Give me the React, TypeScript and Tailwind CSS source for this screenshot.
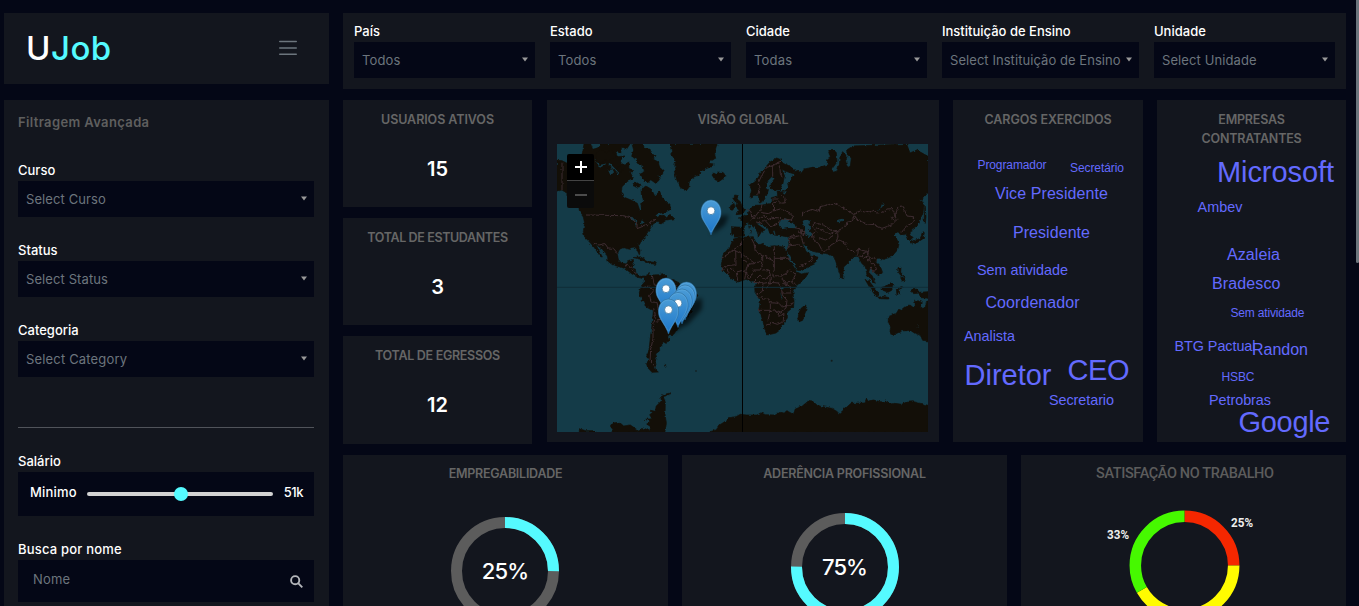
import React from "react";

const sea = "#143b48";
const land = "#130f08";

type WordProps = { x: number; y: number; w: number; size: number; text: string };

const positions: WordProps[] = [
  { x: 24.5, y: 69, w: 69, size: 12, text: "Programador" },
  { x: 117, y: 72, w: 54, size: 12, text: "Secretário" },
  { x: 42, y: 99, w: 113, size: 16, text: "Vice Presidente" },
  { x: 60, y: 138, w: 77, size: 16, text: "Presidente" },
  { x: 24, y: 175, w: 91, size: 14.4, text: "Sem atividade" },
  { x: 32.5, y: 208, w: 94, size: 16, text: "Coordenador" },
  { x: 11, y: 241, w: 51, size: 14.4, text: "Analista" },
  { x: 11.5, y: 285, w: 87, size: 29, text: "Diretor" },
  { x: 114.5, y: 280, w: 62, size: 29, text: "CEO" },
  { x: 96, y: 305, w: 65, size: 14.4, text: "Secretario" },
];

const companies: WordProps[] = [
  { x: 60, y: 82, w: 117, size: 29, text: "Microsoft" },
  { x: 40.5, y: 112, w: 45, size: 14.4, text: "Ambev" },
  { x: 70, y: 160, w: 53, size: 16, text: "Azaleia" },
  { x: 55, y: 189, w: 68.5, size: 16, text: "Bradesco" },
  { x: 73.5, y: 217, w: 74, size: 12, text: "Sem atividade" },
  { x: 17.5, y: 251, w: 81, size: 14.4, text: "BTG Pactual" },
  { x: 95, y: 255, w: 56, size: 16, text: "Randon" },
  { x: 64.5, y: 281, w: 33, size: 12, text: "HSBC" },
  { x: 52, y: 305, w: 62, size: 14.4, text: "Petrobras" },
  { x: 81.5, y: 332, w: 92, size: 29, text: "Google" },
];

function WordCloud({ words }: { words: WordProps[] }) {
  return (
    <svg className="absolute inset-0 h-full w-full" fontFamily="'Liberation Sans', Arial, sans-serif" fill="#636aff">
      {words.map((w) => (
        <text key={w.text} x={w.x} y={w.y} fontSize={w.size} textLength={w.w}>
          {w.text}
        </text>
      ))}
    </svg>
  );
}

function Select({ label, value, valueTrack = "", className = "" }: { label: string; value: string; valueTrack?: string; className?: string }) {
  return (
    <div className={`flex flex-col ${className}`}>
      <div className="h-5 text-[13px] leading-[18px] font-medium whitespace-nowrap text-white">{label}</div>
      <div className="flex h-9 items-center justify-between bg-[#040716] pr-[6px] pb-px pl-2">
        <span className={`text-[13px] leading-5 whitespace-nowrap text-[#6c757d] ${valueTrack}`}>{value}</span>
        <svg width="8" height="5" viewBox="0 0 8 5" className="shrink-0">
          <path d="M1 0.500H7L4 4.500Z" fill="#999" />
        </svg>
      </div>
    </div>
  );
}

function Stat({ title, value, track, className }: { title: string; value: string; track: string; className: string }) {
  return (
    <div className={`flex flex-col items-center bg-[#13161e] pt-[10px] ${className}`}>
      <div className={`text-[12.5px] leading-[19px] font-semibold text-[#666] ${track}`}>{title}</div>
      <div className="mt-[25px] text-[20px] leading-[30px] font-semibold text-white">{value}</div>
    </div>
  );
}

function Pin({ x, y }: { x: number; y: number }) {
  return (
    <g transform={`translate(${x} ${y})`}>
      <path d="M0 0C-1.500-5-5-10-8-15C-12-21-10.500-34.500 0-35C10.500-34.500 12-21 8-15C5-10 1.500-5 0 0Z" fill="url(#pin)" stroke="#2e6c97" strokeWidth=".6" />
      <path d="M-.5-3C-3-9-10-15-9.300-24C-8.500-31-4-34 0-34S8.500-31 9.300-24C10-15 3-9 .5-3" fill="none" stroke="#69b2e2" strokeWidth=".7" opacity=".6" />
      <circle cx="0" cy="-24.300" r="3.900" fill="#fff" stroke="#2e6c97" strokeWidth=".7" />
    </g>
  );
}

const northAmerica =
  "M21 61L36 62 50 69 70 70 96 45 102 12 122 12 128 28 143 24 150 12 240 12 230 27 215 20 212 38 196 35 202 50 225 48 210 62 222 73 238 66 236 84 252 90 241 98 250 114 233 124 216 140 214 154 223 172 243 180 262 190 269 210 275 207 272 190 280 178 274 164 273 148 288 138 303 147 309 157 314 168 329 154 338 174 349 187 360 196 362 208 345 217 321 221 315 229 324 232 341 225 350 233 360 223 374 236 350 240 333 252 324 244 309 252 300 267 290 281 286 292 269 306 265 316 270 332 268 344 260 327 254 321 241 323 239 328 222 323 207 330 202 343 205 358 214 369 229 372 236 361 250 358 251 371 244 384 256 387 258 401 267 409 282 408 276 415 263 412 246 402 230 389 207 380 187 374 174 364 172 348 151 324 137 312 157 351 152 350 131 320 118 305 104 291 100 274 104 250 100 231 89 216 87 202 51 160 36 150 21 153Z";

const arctic = [
  "M246 12L279 12 284 27 299 27 304 43 318 46 310 58 325 66 328 79 343 92 333 109 325 105 328 120 317 130 302 119 294 128 277 117 269 103 283 96 280 78 261 69 258 55 245 49 251 30Z",
  "M139 40L154 30 169 37 185 31 196 48 182 61 167 58 152 70 140 62Z",
  "M253 130L263 129 274 138 263 142 249 137Z",
  "M211 77L222 87 209 99 197 88Z",
];

const islands = [
  "M362 12L368 34 362 42 378 64 371 73 381 82 373 96 380 119 391 142 408 153 416 143 418 125 429 112 447 104 457 91 483 80 493 72 476 70 484 60 497 55 493 39 501 12Z",
  "M486 105L491 99 500 104 505 96 520 98 527 107 519 116 508 124 495 119Z",
  "M554 165L565 167 561 177 571 185 576 199 585 211 577 222 558 224 567 211 556 200 561 189 551 180Z",
  "M542 197L552 190 555 202 547 211 540 208Z",
  "M252 353L270 350 290 361 304 367 289 368 271 358Z",
  "M302 366L319 367 316 373 302 371Z",
  "M754 504L767 495 771 506 765 519 758 541 748 545 744 531 748 516Z",
  "M945 418L957 423 974 445 986 459 984 470 972 461 960 444Z",
  "M984 472L1001 469 1017 473 1016 477 988 476Z",
  "M995 442L1008 439 1024 427 1032 435 1025 451 1014 457 999 451Z",
  "M1039 446L1057 443 1044 450 1053 460 1045 456 1041 467Z",
  "M1082 450L1100 447 1108 457 1134 455 1134 475 1116 473 1103 460 1088 461Z",
  "M1044 383L1053 382 1052 397 1062 409 1053 407 1043 394Z",
  "M1052 413L1063 409 1067 420 1057 423Z",
  "M1082 306L1094 300 1109 298 1115 286 1119 275 1123 278 1119 296 1101 308 1088 305 1086 313Z",
  "M1125 194L1128 228 1126 250 1122 247Z",
  "M870 400L879 404 878 416 871 411Z",
];

const southAmerica =
  "M281 410L298 401 307 405 326 404 338 401 351 414 370 420 387 428 393 439 429 453 444 466 432 483 427 512 410 533 390 538 387 559 370 585 357 583 353 591 357 602 338 610 339 617 328 618 329 632 317 642 320 651 315 664 318 673 311 684 325 696 306 697 292 682 290 669 298 658 290 645 297 629 301 594 305 564 310 513 289 501 276 477 267 462 273 439 283 427Z";

const africa =
  "M550 297L574 292 610 290 616 304 627 315 640 310 649 320 674 317 700 321 709 333 717 359 729 377 741 396 754 402 775 398 768 411 742 435 729 457 732 485 731 500 712 516 712 534 700 550 692 568 678 579 653 585 646 574 638 540 627 511 631 482 615 457 614 442 620 432 613 422 603 424 588 418 564 426 546 418 533 404 520 391 514 374 519 345 541 318Z";

const eurasia =
  "M545 260L576 262 582 242 565 234 582 230 594 221 601 206 615 196 637 195 663 190 664 173 683 168 681 154 708 151 716 143 713 130 724 120 730 104 741 91 754 99 763 87 787 82 807 83 832 74 833 59 841 53 836 36 846 24 859 38 861 66 845 88 850 97 862 92 868 72 870 50 878 35 891 49 887 62 892 83 901 78 904 54 891 43 890 30 909 18 1070 12 1080 39 1100 30 1134 49 1134 158 1111 184 1123 190 1118 224 1102 257 1086 267 1079 281 1090 294 1081 303 1075 297 1068 282 1053 286 1044 275 1032 284 1041 299 1047 311 1043 329 1025 350 1001 358 986 354 976 365 992 382 998 398 985 407 968 392 960 384 956 397 967 408 976 430 967 424 951 405 946 380 935 370 926 350 915 348 895 368 881 381 879 402 869 400 857 363 850 349 835 342 811 338 788 334 768 318 756 309 769 335 785 348 804 352 795 371 751 392 742 390 727 360 711 332 717 313 715 291 696 288 678 286 674 271 668 273 673 286 660 281 654 265 640 254 629 249 618 250 629 258 647 271 635 274 625 291 622 276 610 260 594 250 583 258 581 288 554 292 545 282Z";

const scandinavia =
  "M598 135L610 127 625 112 632 99 647 81 660 66 680 54 690 58 695 66 720 79 735 91 733 102 714 96 695 88 704 104 699 130 692 148 670 152 662 143 664 128 674 116 668 107 653 122 645 143 655 151 650 166 640 184 628 189 625 166 612 166 600 171 605 150Z";

const australia =
  "M1015 530L1040 519 1046 508 1055 511 1067 501 1080 495 1089 502 1096 493 1091 486 1101 482 1117 488 1111 501 1119 509 1126 502 1129 485 1134 481 1134 603 1118 601 1108 580 1099 583 1081 571 1055 573 1025 587 1020 576 1022 562 1015 545Z";

const antarctica = [
  "M88 866L107 872 130 872 145 880 88 880Z",
  "M181 880L190 871 181 858 187 849 208 847 221 858 241 855 257 866 266 873 281 864 298 872 303 861 290 852 301 845 286 838 306 836 299 824 308 817 301 811 316 814 319 795 334 780 332 771 347 762 365 758 341 773 346 787 345 822 349 851 344 880Z",
  "M480 875L498 870 510 854 526 844 535 833 558 830 571 823 590 825 620 825 635 819 646 824 676 825 690 817 702 820 710 812 730 823 736 807 756 799 774 784 791 786 803 797 845 805 862 815 865 824 883 808 903 790 945 789 950 777 955 784 970 780 995 786 1007 783 1020 792 1035 790 1055 793 1068 787 1091 785 1134 796 1134 880 480 880Z",
];

const borders = [
  "M36 68L36 150M108 225L219 227 245 234 261 253 261 266 281 258 300 249 318 238",
  "M131 310L147 315 165 311 174 324 190 325 203 340M224 384L232 372 244 384 250 394 261 403",
  "M280 443L295 438 309 455 299 466 303 486 321 487 326 515 345 529 365 548 350 565M307 407L313 435 337 438 340 420M311 505L316 528 309 565 309 596 302 630 300 663 317 681",
  "M316 438L350 443 380 437M333 530L319 547",
  "M623 164L628 148 624 130 635 107 650 82 671 76 684 67 693 64M668 107L668 77M684 67L690 86 691 101 698 115",
  "M602 238L616 230 628 238 640 227 653 239 670 232 686 234M618 246L632 249 644 240 655 252 663 261 681 253 690 241M592 208L603 215 605 231 618 224 632 215 636 193M636 218L655 221 670 213 671 190M671 213L690 207 704 212 716 220 731 226 724 240 690 235",
  "M671 190L685 183 693 190 704 188 705 173 690 168M683 177L667 177M748 270L765 275 762 284 744 276M735 263L753 267 755 281",
  "M757 231L758 219 786 208 808 215 810 200 835 194 852 190 880 204 893 210 910 223 931 213 955 218 968 213 980 219 1002 216 1010 207 1026 206 1038 232 1030 239 1024 233 1034 230 1044 203 1058 197 1071 228 1094 231 1092 247 1069 258 1055 277",
  "M914 227L925 242 952 252 972 254 996 265 1024 255 1042 238M914 227L904 244 890 247 888 260 874 265 864 278 838 267 820 255 790 247 790 260 820 273 839 282 850 276",
  "M790 260L798 275 787 282 790 298 806 311 817 333M807 293L826 300 846 289 861 278M819 337L832 328 843 315 857 307 864 291 863 280M861 304L870 300 886 311 895 327 914 336 926 328 949 334 957 344M925 328L923 346 935 350 947 335 958 325 950 351",
  "M939 355L955 347 963 357 973 352 978 362M954 356L961 371 972 371 979 386 970 397 960 380M711 331L720 311 716 296 752 286 760 312M720 317L747 314 762 325M715 291L735 286M748 380L765 373 785 360 789 349",
  "M580 295L574 315 550 329 533 343 514 355M550 329L575 342 616 371 635 359 638 345 616 334 612 311 604 295M557 332L558 374 525 378 518 390M616 371L594 372 588 392 595 417M574 342L574 354 601 374",
  "M673 319L673 389M673 355L719 355M635 345L673 364M638 345L638 375 630 390 610 390 600 417M638 390L655 389 661 404 646 418 630 405 610 425M673 389L668 407 693 408 711 399 716 390M661 404L660 430 650 445M693 408L704 430 726 426 741 433M719 389L737 403 725 426",
  "M529 383L537 397 529 405M540 385L559 396 563 422M559 396L577 392 588 398 584 418M613 428L639 428 637 454 620 464M640 430L657 427 685 429 694 443 697 465M697 430L720 437 724 459 695 459",
  "M621 470L639 471 644 478 657 477 658 488 687 490 697 501 712 497 731 488M624 511L660 511M661 491L661 511 654 541M658 515L681 512 702 520 699 546 682 553 665 547 651 556M676 512L689 529 701 521M697 465L711 481 708 504 692 516",
];

function WorldMap() {
  return (
    <svg className="block h-[288px] w-[371px]" viewBox="21 12 1113 864">
      <defs>
        <linearGradient id="pin" x1="0" y1="0" x2="0" y2="1">
          <stop offset="0" stopColor="#4b9cd6" />
          <stop offset="1" stopColor="#1b75c9" />
        </linearGradient>
        <filter id="coast" x="0" y="0" width="1200" height="900" filterUnits="userSpaceOnUse" colorInterpolationFilters="sRGB">
          <feTurbulence type="fractalNoise" baseFrequency="0.09" numOctaves="3" seed="4" result="noise" />
          <feDisplacementMap in="SourceGraphic" in2="noise" scale="10" xChannelSelector="R" yChannelSelector="G" />
        </filter>
        <filter id="shadow" x="-50%" y="-50%" width="200%" height="200%">
          <feGaussianBlur stdDeviation="2.200" />
        </filter>
      </defs>
      <rect x="21" y="12" width="1113" height="864" fill={sea} />
      <g filter="url(#coast)">
        <g fill={land} stroke={land} strokeWidth="2">
          <path d={northAmerica} />
          <path d={southAmerica} />
          <path d={africa} />
          <path d={eurasia} />
          <path d={scandinavia} />
          <path d={australia} />
          {[...arctic, ...islands, ...antarctica].map((d) => (
            <path key={d} d={d} />
          ))}
        </g>
        <g fill={sea}>
          <path d="M686 254L693 239 705 235 719 240 713 247 733 252 739 265 714 264 695 268Z" />
          <path d="M758 243L771 236 782 241 775 253 783 263 776 271 787 281 782 292 767 287 763 265Z" />
          <path d="M981 213L991 205 997 189 1002 184 999 198 986 212Z" />
          <path d="M860 243L877 239 880 243 863 247ZM696 155L710 153 706 161Z" />
          <path d="M235 230L250 231 259 241 250 243ZM253 245L257 258 262 242ZM274 239L284 248 273 253Z" />
          <path d="M172 86L178 95 184 81 192 96 182 107ZM179 69L210 101 205 103 175 72ZM133 58L149 75 172 70 150 83Z" />
          <path d="M692 444L699 440 701 447 694 450ZM691 456L698 476 694 475Z" />
        </g>
        <g fill={land}>
          <circle cx="345" cy="676" r="4" opacity=".7" />
          <circle cx="438" cy="693" r="3" opacity=".5" />
          <circle cx="845" cy="662" r="3" opacity=".7" />
          <path d="M594 253L600 260 597 268ZM600 270L606 272 603 282Z" />
          <path d="M1101 555L1107 560 1104 565Z" fill="#1c292a" />
        </g>
        <g fill="none" stroke="#3d2c31" strokeWidth="3">
          {borders.map((d) => (
            <path key={d} d={d} />
          ))}
        </g>
      </g>
      <path d="M21 442H1134" stroke="#102d38" strokeWidth="3" />
      <path d="M577.500 12V876" stroke="#000" strokeWidth="3" />
      <g transform="translate(-1650 -420) scale(3)">
        <g filter="url(#shadow)" fill="#000" opacity=".6">
          <path d="M711 235L719 216 729 215 725 225Z" />
          <path d="M671 334L686 303 702 298 702 309 690 322Z" />
          <path d="M674 330L693 303 701 302 699 312 687 325Z" />
        </g>
        <Pin x={711} y={235} />
        <Pin x={666} y={313} />
        <Pin x={686.5} y={317} />
        <Pin x={685} y={320} />
        <Pin x={682} y={324} />
        <Pin x={678} y={327.5} />
        <Pin x={668.5} y={334} />
      </g>
    </svg>
  );
}

function Ring({ percent, label, className }: { percent: number; label: string; className: string }) {
  const c = 2 * Math.PI * 48.5;
  return (
    <div className={`relative h-[108px] w-[108px] ${className}`}>
      <svg width="108" height="108" viewBox="0 0 108 108" fill="none" strokeWidth="11">
        <circle cx="54" cy="54" r="48.500" stroke="#5c5c5c" />
        <circle cx="54" cy="54" r="48.500" stroke="#55faff" strokeDasharray={`${(c * percent) / 100} ${c}`} transform="rotate(-90 54 54)" />
      </svg>
      <div className="absolute inset-0 flex items-center justify-center text-[22px] font-medium tracking-[-0.9px] text-white">{label}</div>
    </div>
  );
}

const cardTitle = "text-[12.5px] leading-[19px] font-semibold text-[#666]";

export default function App() {
  return (
    <div className="relative flex h-[606px] w-[1359px] gap-[14px] overflow-hidden bg-[#040716] pt-[13px] pl-1 font-['Inter',sans-serif]">
      <aside className="flex w-[325px] shrink-0 flex-col gap-4">
        <header className="flex h-[71px] shrink-0 items-center justify-between bg-[#13161e] pr-8 pb-px pl-[22px]">
          <h1 className="text-[33px] leading-none font-medium tracking-[0.5px] text-white">
            U<span className="text-[#55faff]">Job</span>
          </h1>
          <svg width="18" height="16" viewBox="0 0 18 16" stroke="#6c757d" strokeWidth="1.500" strokeLinecap="round">
            <path d="M.75 1.500H17.250M.75 8H17.250M.75 14.250H17.250" />
          </svg>
        </header>
        <section className="flex h-[540px] shrink-0 flex-col bg-[#13161e] pt-3 pr-[15px] pl-[14px]">
          <h2 className="text-[13px] leading-5 font-semibold tracking-[0.37px] text-[#5f5f5f]">Filtragem Avançada</h2>
          <Select className="mt-[29px]" label="Curso" value="Select Curso" valueTrack="tracking-[0.1px]" />
          <Select className="mt-6" label="Status" value="Select Status" valueTrack="tracking-[0.1px]" />
          <Select className="mt-6" label="Categoria" value="Select Category" valueTrack="tracking-[0.17px]" />
          <div className="mt-[50px] h-px shrink-0 bg-[#50535a]" />
          <div className="mt-6 h-5 text-[13px] leading-[18px] font-medium text-white">Salário</div>
          <div className="flex h-11 shrink-0 items-center bg-[#040716] pr-[11px] pb-[3px] pl-3 text-[13px] font-medium text-white">
            <span className="w-[57px] tracking-[0.2px]">Minimo</span>
            <div className="relative mt-[3px] h-1 w-[186px] rounded-sm bg-[#d3d3d3]">
              <div className="absolute top-[-5px] left-[87px] h-[14px] w-[14px] rounded-full bg-[#55faff]" />
            </div>
            <span className="ml-auto tracking-[-0.5px]">51k</span>
          </div>
          <div className="mt-6 h-5 text-[13px] leading-[18px] font-medium tracking-[0.2px] text-white">Busca por nome</div>
          <div className="flex h-[42px] shrink-0 items-center justify-between bg-[#040716] pr-[11px] pb-[2px] pl-[15px]">
            <span className="text-[13px] tracking-[0.2px] text-[#6c757d]">Nome</span>
            <svg width="13" height="13" viewBox="0 0 13 13" fill="none" stroke="#b5b7bb" strokeWidth="1.900" className="mt-[3px]">
              <circle cx="5.200" cy="5.200" r="4.100" />
              <path d="M8.100 8.100L12.300 12.300" />
            </svg>
          </div>
        </section>
      </aside>

      <main className="flex w-[1003px] shrink-0 flex-col">
        <section className="flex h-[76px] shrink-0 gap-[15px] bg-[#13161e] px-[11px] pt-[9px]">
          <Select className="w-[181px]" label="País" value="Todos" valueTrack="tracking-[0.15px]" />
          <Select className="w-[181px]" label="Estado" value="Todos" valueTrack="tracking-[0.15px]" />
          <Select className="w-[181px]" label="Cidade" value="Todas" valueTrack="tracking-[0.2px]" />
          <Select className="w-[197px]" label="Instituição de Ensino" value="Select Instituição de Ensino" valueTrack="tracking-[0.06px]" />
          <Select className="w-[181px]" label="Unidade" value="Select Unidade" valueTrack="tracking-[0.1px]" />
        </section>

        <div className="mt-[11px] flex h-[344px] shrink-0">
          <div className="flex w-[189px] flex-col gap-[11px]">
            <Stat className="h-[107px]" title="USUARIOS ATIVOS" value="15" track="tracking-[-0.07px]" />
            <Stat className="h-[107px]" title="TOTAL DE ESTUDANTES" value="3" track="tracking-[-0.38px]" />
            <Stat className="h-[108px]" title="TOTAL DE EGRESSOS" value="12" track="tracking-[-0.3px]" />
          </div>
          <section className="ml-[15px] flex h-[342px] w-[392px] flex-col bg-[#13161e] pt-[10px]">
            <h2 className={`text-center tracking-[-0.1px] ${cardTitle}`}>VISÃO GLOBAL</h2>
            <div className="relative mt-[15px] ml-[10px] h-[288px] w-[371px]">
              <WorldMap />
              <div className="absolute top-[10px] left-[10px] flex w-[27px] flex-col overflow-hidden rounded-[2px]">
                <div className="flex h-[27px] items-center justify-center border-b border-[#444] bg-black pl-px">
                  <svg width="12" height="12" stroke="#fff" strokeWidth="2">
                    <path d="M0 6H12M6 0V12" />
                  </svg>
                </div>
                <div className="flex h-[27px] items-center justify-center bg-[#0b0b0b] pl-px">
                  <svg width="12" height="2">
                    <path d="M0 1H12" stroke="#4c4c4c" strokeWidth="2" />
                  </svg>
                </div>
              </div>
            </div>
          </section>
          <section className="relative ml-[14px] h-[342px] w-[190px] bg-[#13161e] pt-[10px] text-center">
            <h2 className={`tracking-[-0.07px] ${cardTitle}`}>CARGOS EXERCIDOS</h2>
            <WordCloud words={positions} />
          </section>
          <section className="relative ml-[14px] h-[342px] w-[189px] bg-[#13161e] pt-[10px] text-center">
            <h2 className={`tracking-[-0.2px] ${cardTitle}`}>
              EMPRESAS
              <br />
              CONTRATANTES
            </h2>
            <WordCloud words={companies} />
          </section>
        </div>

        <div className="mt-[11px] flex h-[220px] shrink-0 gap-[14px]">
          <section className="flex w-[325px] flex-col items-center bg-[#13161e] pt-[9px]">
            <h2 className={`tracking-[-0.25px] ${cardTitle}`}>EMPREGABILIDADE</h2>
            <Ring className="mt-[34px] mr-px" percent={25} label="25%" />
          </section>
          <section className="flex w-[325px] flex-col items-center bg-[#13161e] pt-[9px]">
            <h2 className={`tracking-[-0.22px] ${cardTitle}`}>ADERÊNCIA PROFISSIONAL</h2>
            <Ring className="mt-[30px]" percent={75} label="75%" />
          </section>
          <section className="w-[325px] bg-[#13161e]">
            <svg width="325" height="220" viewBox="0 0 325 220" fontFamily="Roboto, 'Liberation Sans', sans-serif">
              <text x="75" y="23" fontSize="14.500" fontWeight="500" fill="#5c5c5c" textLength="178">SATISFAÇÃO NO TRABALHO</text>
              <g fill="none" strokeWidth="11.500" transform="rotate(-90 163.500 110.500)">
                <circle cx="163.500" cy="110.500" r="49.200" stroke="#f52700" pathLength="100" strokeDasharray="25 75" />
                <circle cx="163.500" cy="110.500" r="49.200" stroke="#fffb00" pathLength="100" strokeDasharray="41.700 58.300" strokeDashoffset="-25" />
                <circle cx="163.500" cy="110.500" r="49.200" stroke="#46f900" pathLength="100" strokeDasharray="33.300 66.700" strokeDashoffset="-66.700" />
              </g>
              <g fill="#eee" fontSize="12" fontWeight="700">
                <text x="210" y="71.500" textLength="22" lengthAdjust="spacingAndGlyphs">25%</text>
                <text x="86" y="83.500" textLength="22" lengthAdjust="spacingAndGlyphs">33%</text>
              </g>
            </svg>
          </section>
        </div>
      </main>
      <div className="absolute top-0 right-0 h-[263px] w-[3px] rounded-b-sm bg-[#6c757d]" />
    </div>
  );
}
